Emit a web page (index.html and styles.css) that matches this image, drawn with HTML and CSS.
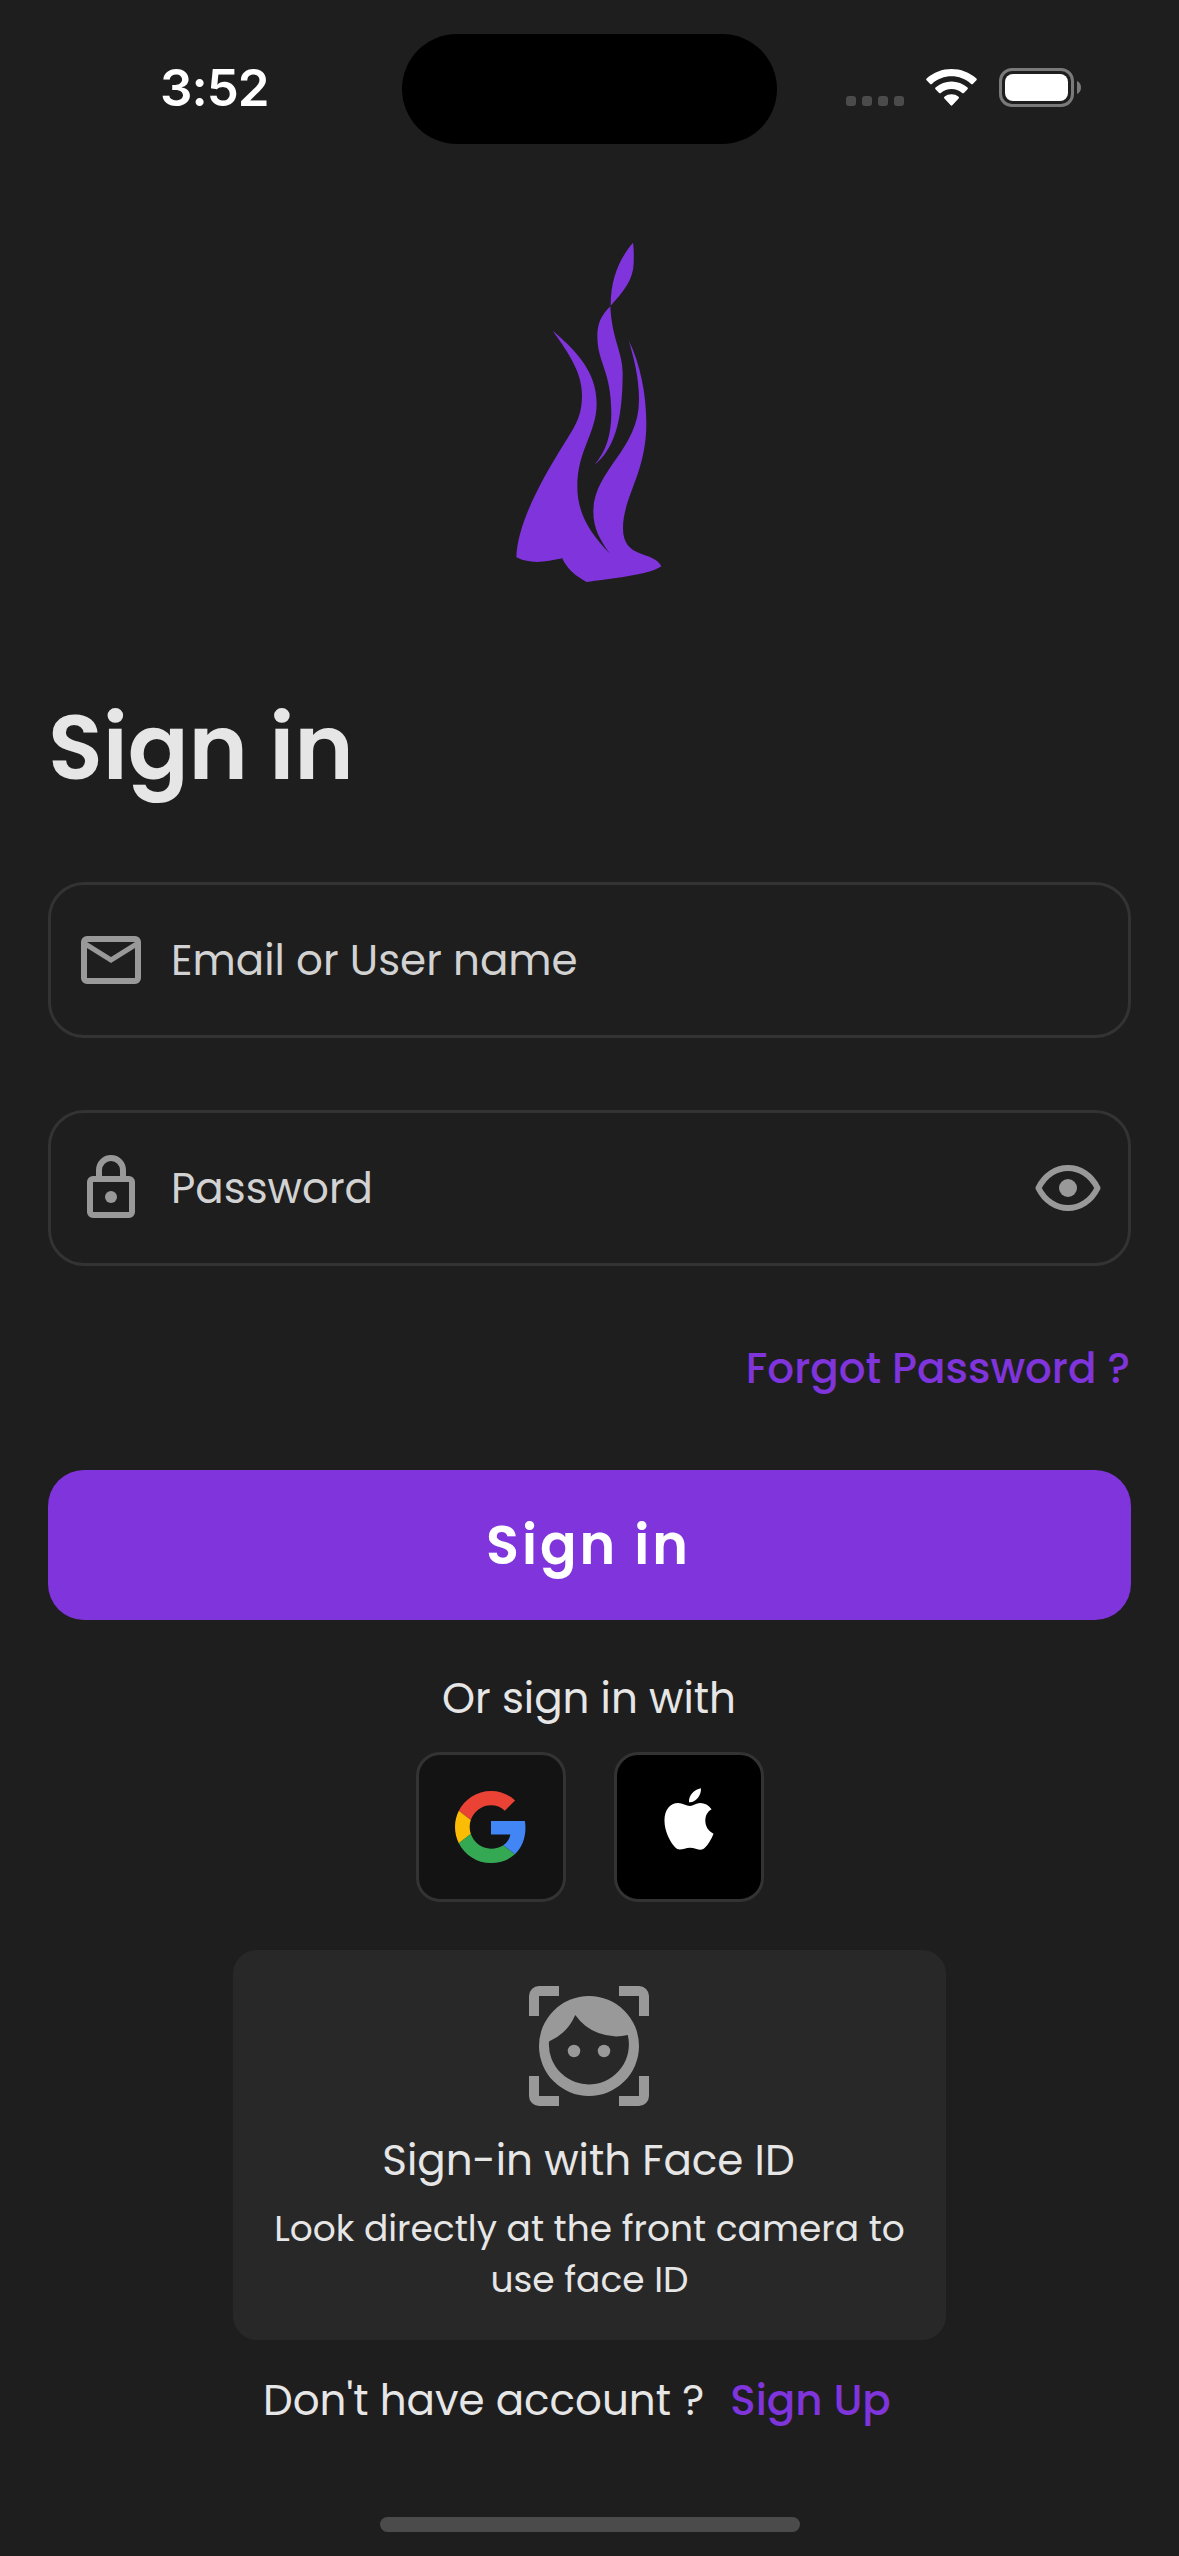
FILE: index.html
```html
<!DOCTYPE html>
<html lang="en">
<head>
<meta charset="utf-8">
<title>Sign in</title>
<link rel="stylesheet" href="styles.css">
</head>
<body>
<div class="screen">
  <header class="status">
    <span class="time">3:52</span>
    <div class="island"></div>
    <div class="indicators">
      <svg class="cell" viewBox="0 0 58 10" width="58" height="10"><g fill="#4b4b4b"><rect width="10" height="10" rx="3"/><rect x="16" width="10" height="10" rx="3"/><rect x="32" width="10" height="10" rx="3"/><rect x="48" width="10" height="10" rx="3"/></g></svg>
      <svg class="wifi" viewBox="0 0 51 38" width="51" height="38" fill="#fff"><path d="M.6 11.2Q-.2 10.400.6 9.600C14.500-3.200 36.500-3.200 50.400 9.600Q51.200 10.400 50.400 11.200L46.800 14.900Q46 15.700 45.100 14.900C34 4.800 17 4.800 5.900 14.900Q5 15.700 4.200 14.900Z"/><path d="M9.500 20.200Q8.600 19.400 9.500 18.500C18.500 10.500 32.500 10.500 41.500 18.500Q42.400 19.400 41.500 20.200L37.900 23.900Q37.100 24.700 36.200 23.900C30.200 18.800 20.800 18.800 14.800 23.900Q13.900 24.700 13.100 23.900Z"/><path d="M18.400 29.400Q17.500 28.500 18.400 27.700C22.300 24.400 28.700 24.400 32.600 27.700Q33.500 28.500 32.600 29.400L26.300 36.300Q25.500 37.100 24.700 36.300Z"/></svg>
      <svg class="battery" viewBox="0 0 82 39" width="82" height="39"><rect x="1.500" y="1.500" width="72" height="36" rx="11.500" fill="none" stroke="#7a7a7a" stroke-width="3"/><rect x="6" y="6" width="63" height="27" rx="8" fill="#fff"/><path d="M78 13C80.500 14 82 16.500 82 19.500S80.500 25 78 26Z" fill="#7a7a7a"/></svg>
    </div>
  </header>
  <main class="content">
    <svg class="logo" viewBox="0 0 660 1140" width="220" height="380" fill="#8034dc">
      <path d="M459 68C422 112 392 170 392 257C432 214 460 178 461 130C462 100 461 80 459 68Z"/>
      <path d="M391 259C362 286 352 315 352 348C352 430 394 450 394 580C394 645 378 695 343 735C400 690 428 610 428 460C428 395 396 360 391 259Z"/>
      <path d="M218 332C280 385 350 450 350 550C350 640 292 690 292 800C292 880 330 940 390 1001C360 960 340 925 340 875C340 750 477 690 477 540C477 470 460 410 446 361C480 430 499 520 499 610C499 760 429 830 429 925C429 1020 520 990 544 1039C510 1065 380 1078 320 1086C285 1068 260 1045 247 1015C200 1024 155 1035 109 1012C112 915 178 790 250 675C290 612 306 585 306 525C306 460 270 405 218 332Z"/>
    </svg>
    <h1 class="title">Sign in</h1>
    <div class="field">
      <svg class="icon" viewBox="0 0 24 24"><path d="M22 6a2 2 0 0 0-2-2H4a2 2 0 0 0-2 2v12a2 2 0 0 0 2 2h16a2 2 0 0 0 2-2Zm-2 0-8 5-8-5Zm0 12H4V8l8 5 8-5Z"/></svg>
      <span class="label">Email or User name</span>
    </div>
    <div class="field">
      <svg class="icon" viewBox="0 0 24 24"><path fill-rule="evenodd" d="M7 8V6a5 5 0 0 1 10 0v2h1a2 2 0 0 1 2 2v10a2 2 0 0 1-2 2H6a2 2 0 0 1-2-2V10a2 2 0 0 1 2-2Zm2 0h6V6a3 3 0 0 0-6 0Zm-3 2v10h12V10Z"/><circle cx="12" cy="15" r="2"/></svg>
      <span class="label">Password</span>
      <svg class="icon" viewBox="0 0 24 24"><path d="M2.150 12C6.500 3.100 17.500 3.100 21.850 12C17.500 20.900 6.500 20.900 2.150 12Z" fill="none" stroke="#999" stroke-width="2" stroke-linejoin="round"/><circle cx="12" cy="12" r="3"/></svg>
    </div>
    <a class="forgot">Forgot Password ?</a>
    <button class="submit">Sign in</button>
    <p class="alt">Or sign in with</p>
    <div class="providers">
      <button class="provider google"><svg viewBox="0 0 48 48" width="72" height="72"><path fill="#EA4335" d="M24 9.500c3.540 0 6.710 1.220 9.210 3.600l6.850-6.850C35.900 2.380 30.470 0 24 0 14.620 0 6.510 5.380 2.560 13.220l7.980 6.190C12.430 13.720 17.740 9.500 24 9.500z"/><path fill="#4285F4" d="M46.980 24.550c0-1.570-.15-3.090-.38-4.550H24v9.020h12.940c-.58 2.960-2.260 5.480-4.780 7.180l7.730 6c4.510-4.180 7.090-10.360 7.090-17.650z"/><path fill="#FBBC05" d="M10.530 28.590c-.48-1.450-.76-2.990-.76-4.590s.27-3.140.76-4.590l-7.980-6.190C.92 16.460 0 20.120 0 24c0 3.880.92 7.540 2.560 10.780l7.970-6.190z"/><path fill="#34A853" d="M24 48c6.480 0 11.930-2.130 15.890-5.810l-7.730-6c-2.150 1.450-4.920 2.300-8.160 2.300-6.260 0-11.570-4.220-13.470-9.910l-7.980 6.190C6.510 42.620 14.620 48 24 48z"/></svg></button>
      <button class="provider apple"><svg viewBox="0 0 150 190" width="50" height="63" fill="#fff"><path d="M111 1C90 5 73 24 75 43C95 45 113 22 111 1Z"/><path d="M78 54C66 54 56 45 42 45C18 45 1 66 1 98C1 130 18 163 33 179C46 193 60 180 78 180S110 193 122 181C133 171 142 155 149 138C118 124 116 79 143 64C134 51 122 45 109 45C96 45 88 54 78 54Z"/></svg></button>
    </div>
    <section class="faceid">
      <svg class="face-icon" viewBox="0 0 24 24" width="120" height="120" fill="#999"><path d="M0 6V2a2 2 0 0 1 2-2h4v2H2v4ZM18 0h4a2 2 0 0 1 2 2v4h-2V2h-4ZM24 18v4a2 2 0 0 1-2 2h-4v-2h4v-4ZM6 24H2a2 2 0 0 1-2-2v-4h2v4h4Z"/><path fill-rule="evenodd" d="M12 2a10 10 0 1 0 0 20a10 10 0 0 0 0-20ZM9.250 5.800A10 10 0 0 0 19.750 9.800A8 8 0 1 1 4 11.100A10.200 10.200 0 0 0 9.250 5.800Z"/><circle cx="9" cy="13" r="1.250"/><circle cx="15" cy="13" r="1.250"/></svg>
      <h2 class="face-title">Sign-in with Face ID</h2>
      <p class="face-text">Look directly at the front camera to<br>use face ID</p>
    </section>
    <p class="signup">Don't have account ?<a class="link">Sign Up</a></p>
  </main>
  <div class="home"></div>
</div>
</body>
</html>
```
FILE: styles.css
```css
* { box-sizing: border-box; margin: 0; padding: 0; }
body { background: #1e1e1e; }
.screen { display: flex; flex-direction: column; width: 1179px; height: 2556px; overflow: hidden; background: #1e1e1e; color: #e6e6e6; font-family: Poppins, Inter, "Open Sans", sans-serif; font-size: 42px; line-height: 60px; white-space: nowrap; }
svg { display: block; flex: none; }
.status { display: grid; grid-template-columns: 402px 375px 402px; height: 220px; align-items: start; }
.time { padding: 58px 0 0 160px; font-family: Inter, sans-serif; font-size: 51px; font-weight: 600; letter-spacing: -1px; color: #fff; }
.island { height: 110px; margin-top: 34px; border-radius: 55px; background: #000; }
.indicators { display: flex; align-items: flex-start; padding: 68px 0 0 69px; }
.cell { margin: 28px 22px 0 0; }
.wifi { margin: 1px 22px 0 0; }
.content { display: flex; flex-direction: column; padding: 0 48px; }
.logo { align-self: center; }
.title { margin: 88px 0 74px; font-size: 90px; font-weight: 600; line-height: 120px; letter-spacing: -0.1px; }
.field { display: flex; align-items: center; height: 156px; margin-bottom: 72px; padding: 0 24px; border: 3px solid #333; border-radius: 36px; }
.icon { width: 72px; height: 72px; fill: #999; }
.label { flex: 1; padding: 2px 0 0 24px; color: #d2d2d2; }
.forgot { align-self: flex-end; margin: 1px 1px 71px 0; font-weight: 500; color: #8034dc; }
.submit { height: 150px; margin-bottom: 49px; padding-right: 2px; border: 0; border-radius: 36px; background: #8034dc; color: #fff; font: inherit; font-size: 54px; font-weight: 600; letter-spacing: 3px; }
.alt { padding-right: 1px; text-align: center; }
.providers { display: flex; justify-content: center; gap: 48px; margin: 23px 0 48px; padding-left: 1px; }
.provider { display: flex; justify-content: center; align-items: flex-start; width: 150px; height: 150px; border: 3px solid #333; border-radius: 24px; background: #131313; }
.google { padding-top: 36px; }
.apple { padding-top: 33px; background: #000; }
.faceid { display: flex; flex-direction: column; align-items: center; align-self: center; width: 713px; height: 390px; padding-top: 36px; border-radius: 24px; background: #282828; }
.face-icon { margin-right: 1px; }
.face-title { margin: 25px 2px 12px 0; font-size: 42px; font-weight: 400; }
.face-text { font-size: 36px; line-height: 51px; text-align: center; }
.signup { display: flex; margin-top: 31px; padding-left: 215px; }
.link { margin-left: 26px; font-weight: 500; color: #8034dc; }
.home { width: 420px; height: 15px; margin: 86px auto 0; border-radius: 8px; background: #4b4b4b; }
```
